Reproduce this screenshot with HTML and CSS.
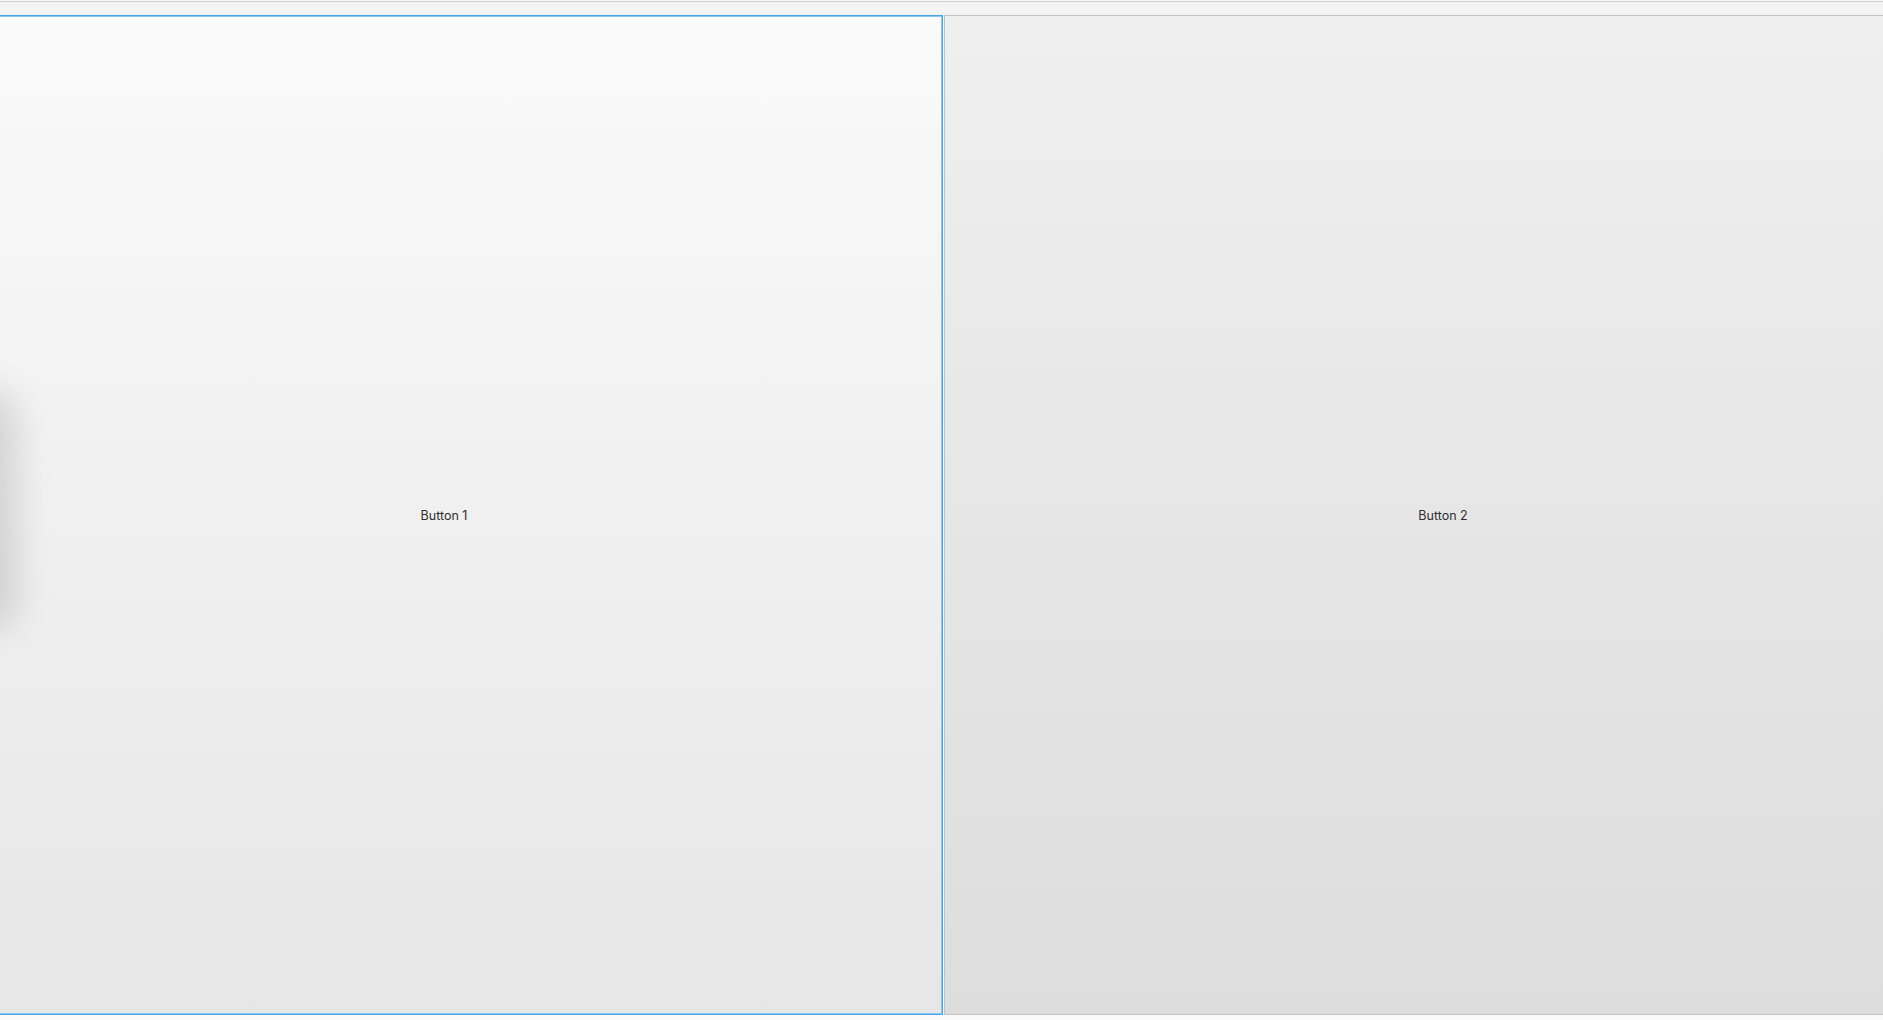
FILE: index.html
```html
<!DOCTYPE html>
<html lang="en">

<head>
    <meta charset="UTF-8">
    <title>Split Buttons</title>
    <link rel="stylesheet" href="styles.css">
</head>

<body>
    <div class="toolbar"></div>
    <div class="viewport">
        <div class="strip">
            <button class="btn btn-focused" type="button">Button 1</button>
            <button class="btn" type="button">Button 2</button>
        </div>
        <div class="drag-shadow"></div>
    </div>
    <div class="footer"></div>
</body>

</html>
```

FILE: styles.css
```css
html,
body {
    margin: 0;
    height: 100%;
}

body {
    background-color: #f9f9f9;
    font-family: Inter, "Noto Sans", sans-serif;
    overflow: hidden;
}

.toolbar {
    height: 13px;
    border-top: 1px solid #cfcfcf;
    margin-top: 1px;
    background-color: #f4f4f4;
}

.viewport {
    position: relative;
    height: 1000px;
    overflow: hidden;
}

.strip {
    display: flex;
    gap: 1px;
    height: 100%;
    margin-left: -55px;
}

.btn {
    flex: 0 0 998px;
    height: 100%;
    box-sizing: border-box;
    margin: 0;
    padding: 0;
    border: 1px solid #c2c2c2;
    border-radius: 0;
    background: linear-gradient(to bottom, #efefef, #dddddd);
    color: #2e2e2e;
    font-family: Inter, "Noto Sans", sans-serif;
    font-size: 12.5px;
    cursor: pointer;
}

.btn-focused {
    border: 1px solid #45a6e6;
    box-shadow: inset 0 0 0 1px #8ac6f0;
    background: linear-gradient(to bottom, #fafafa, #e6e6e6);
}

.drag-shadow {
    position: absolute;
    left: -45px;
    top: 375px;
    width: 62px;
    height: 240px;
    border-radius: 30px;
    background-color: rgba(0, 0, 0, 0.12);
    filter: blur(16px);
    pointer-events: none;
}

.footer {
    height: 5px;
    background-color: #f9f9f9;
}
```
